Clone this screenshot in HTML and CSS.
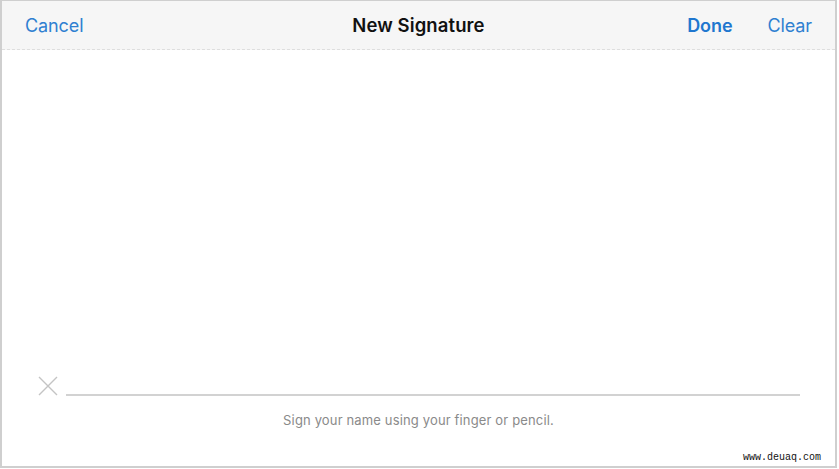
FILE: index.html
```html
<!DOCTYPE html>
<html>
<head>
<meta charset="utf-8">
<link rel="stylesheet" href="styles.css">
</head>
<body>
<div class="frame">
  <header class="bar">
    <span class="btn">Cancel</span>
    <span class="title">New Signature</span>
    <div class="right">
      <span class="btn strong">Done</span>
      <span class="btn">Clear</span>
    </div>
  </header>
  <main class="pad"></main>
  <div class="signline">
    <svg class="xmark" width="20" height="20" viewBox="0 0 20 20"><path d="M1 1 L19 19 M19 1 L1 19" stroke="#c4c4c4" stroke-width="1.4" fill="none"/></svg>
    <div class="line"></div>
  </div>
  <p class="hint">Sign your name using your finger or pencil.</p>
  <span class="mark">www.deuaq.com</span>
</div>
</body>
</html>
```
FILE: styles.css
```css
html, body { margin: 0; padding: 0; background: #ffffff; }
.frame {
  position: relative;
  box-sizing: border-box;
  width: 837px;
  height: 468px;
  border: 2px solid #cfcfcf;
  border-top-width: 1px;
  display: flex;
  flex-direction: column;
  font-family: Inter, "Liberation Sans", sans-serif;
  background: #fff;
}
.bar {
  position: relative;
  height: 48px;
  background: #f6f6f6;
  border-bottom: 1px dashed #dedede;
  display: flex;
  align-items: center;
  justify-content: space-between;
  padding: 0 23px 0 23px;
  flex: none;
}
.btn { font-size: 18px; color: #2f80d1; letter-spacing: -0.1px; }
.btn.strong { font-weight: 600; color: #1f77cf; }
.right { display: flex; gap: 35px; }
.title {
  position: absolute;
  left: 0; right: 0;
  text-align: center;
  font-size: 18.5px;
  font-weight: 600;
  color: #111;
  pointer-events: none;
  letter-spacing: 0.1px;
}
.pad { flex: 1; }
.signline {
  display: flex;
  align-items: flex-end;
  padding: 0 35px 0 36px;
  gap: 8px;
  flex: none;
}
.xmark { display: block; }
.line { flex: 1; height: 2px; background: #d2d2d2; }
.hint {
  margin: 16px 0 38px;
  text-align: center;
  font-size: 13px;
  color: #8a8a8a;
  letter-spacing: 0.15px;
}
.mark {
  position: absolute;
  right: 14px;
  bottom: 3px;
  font-family: "Liberation Mono", monospace;
  font-size: 10px;
  color: #111;
}
```
